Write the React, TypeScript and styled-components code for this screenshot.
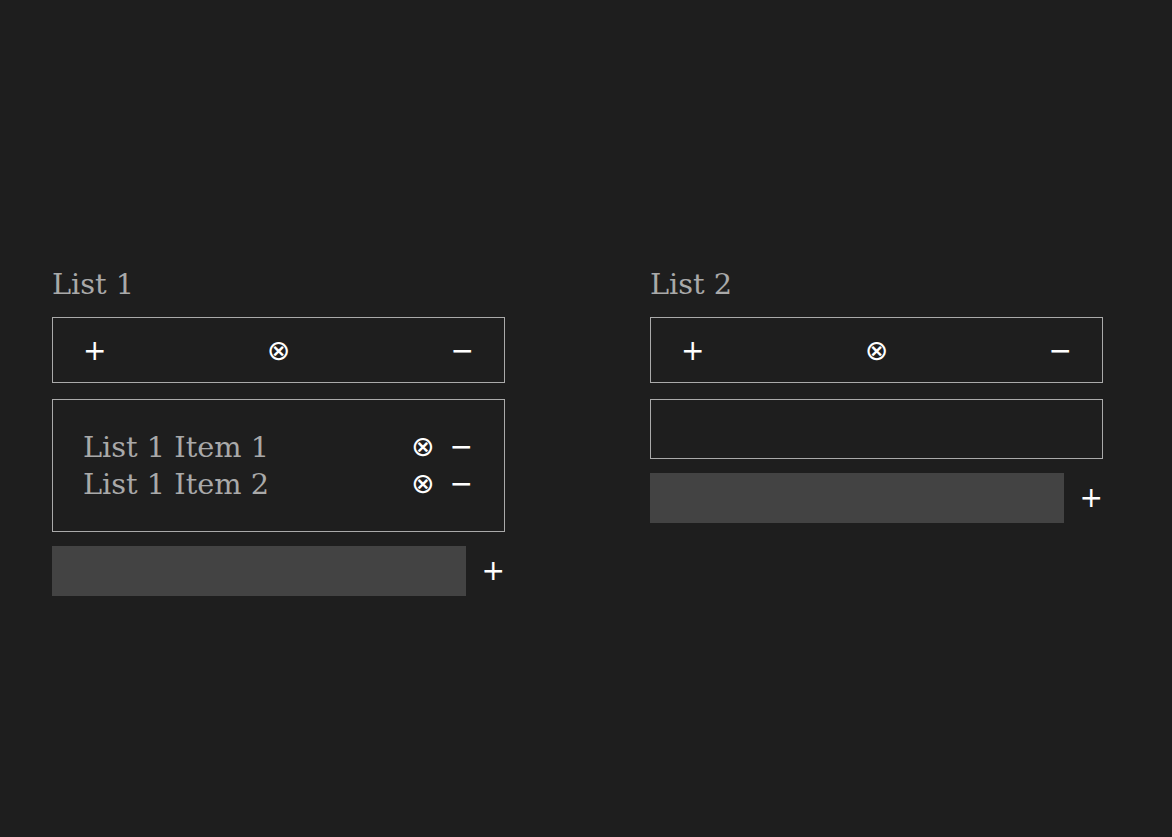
import styled, { createGlobalStyle } from 'styled-components'

const GlobalStyle = createGlobalStyle`
  html, body {
    margin: 0;
    padding: 0;
    background: #1e1e1e;
  }
  body {
    font-family: "DejaVu Serif", serif;
  }
`

type Item = { id: number; label: string }

const lists: { title: string; items: Item[] }[] = [
  {
    title: 'List 1',
    items: [
      { id: 1, label: 'List 1 Item 1' },
      { id: 2, label: 'List 1 Item 2' },
    ],
  },
  { title: 'List 2', items: [] },
]

const Page = styled.main`
  display: flex;
  align-items: flex-start;
  gap: 145px;
  padding: 267px 0 0 52px;
  min-height: 100vh;
  box-sizing: border-box;
`

const Column = styled.section`
  width: 453px;
  display: flex;
  flex-direction: column;
  gap: 16px;
`

const Title = styled.h2`
  margin: 0;
  font-family: "DejaVu Serif", serif;
  font-size: 28.8px;
  line-height: 34px;
  font-weight: normal;
  color: #a9a9a9;
`

const Toolbar = styled.div`
  display: flex;
  justify-content: space-between;
  align-items: center;
  box-sizing: border-box;
  height: 66px;
  padding: 2px 30px 0;
  border: 1px solid #aaaaaa;
`

const IconButton = styled.button`
  background: none;
  border: none;
  padding: 0;
  margin: 0;
  color: #ffffff;
  font-family: "DejaVu Sans", sans-serif;
  font-size: 28px;
  line-height: 32px;
  cursor: pointer;
`

const ItemsBox = styled.ul`
  list-style: none;
  margin: 0;
  box-sizing: border-box;
  min-height: 60px;
  padding: 28px 31px 29px 30px;
  border: 1px solid #aaaaaa;
`

const Row = styled.li`
  display: flex;
  align-items: center;
  height: 37px;
`

const Label = styled.span`
  flex: 1;
  font-family: "DejaVu Serif", serif;
  font-size: 28.8px;
  color: #a9a9a9;
`

const RowActions = styled.div`
  display: flex;
  gap: 15px;
`

const AddRow = styled.div`
  display: flex;
  align-items: center;
  gap: 16px;
  margin-top: -2px;
`

const TextInput = styled.input`
  flex: 1;
  height: 50px;
  border: none;
  outline: none;
  background: #434343;
  color: #ffffff;
  font-family: "DejaVu Serif", serif;
  font-size: 24px;
  padding: 0 10px;
  min-width: 0;
`

const ListPanel = ({ title, items }: { title: string; items: Item[] }) => (
  <Column>
    <Title>{title}</Title>
    <Toolbar>
      <IconButton aria-label="add">+</IconButton>
      <IconButton aria-label="clear">⊗</IconButton>
      <IconButton aria-label="remove">−</IconButton>
    </Toolbar>
    <ItemsBox>
      {items.map((item) => (
        <Row key={item.id}>
          <Label>{item.label}</Label>
          <RowActions>
            <IconButton aria-label="delete">⊗</IconButton>
            <IconButton aria-label="remove">−</IconButton>
          </RowActions>
        </Row>
      ))}
    </ItemsBox>
    <AddRow>
      <TextInput />
      <IconButton aria-label="add item">+</IconButton>
    </AddRow>
  </Column>
)

export default function App() {
  return (
    <>
      <GlobalStyle />
      <Page>
        {lists.map((l) => (
          <ListPanel key={l.title} title={l.title} items={l.items} />
        ))}
      </Page>
    </>
  )
}
